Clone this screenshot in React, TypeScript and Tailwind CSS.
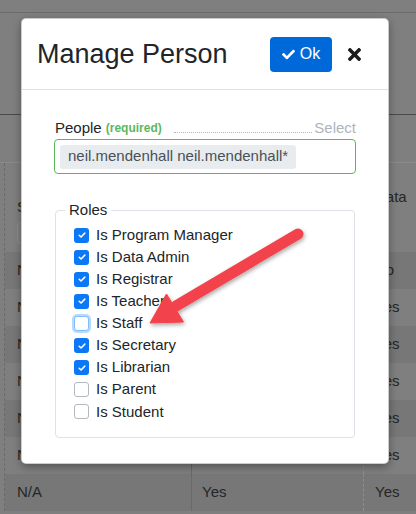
import { FaCheck, FaTimes } from 'react-icons/fa';

const roles = [
  { label: 'Is Program Manager', checked: true },
  { label: 'Is Data Admin', checked: true },
  { label: 'Is Registrar', checked: true },
  { label: 'Is Teacher', checked: true },
  { label: 'Is Staff', checked: false, focused: true },
  { label: 'Is Secretary', checked: true },
  { label: 'Is Librarian', checked: true },
  { label: 'Is Parent', checked: false },
  { label: 'Is Student', checked: false },
];

const rows = ['No', 'Yes', 'Yes', 'Yes', 'Yes', 'Yes', 'Yes'];

function Checkbox({ checked, focused }: { checked: boolean; focused?: boolean }) {
  if (checked) {
    return (
      <span className="w-[15px] h-[15px] rounded-[3px] bg-[#0b78f5] flex items-center justify-center shrink-0">
        <svg viewBox="0 0 16 16" className="w-[10px] h-[10px]">
          <path d="M3.5 8.5l3 2.8L12.5 5" fill="none" stroke="#fff" strokeWidth="2.4" strokeLinecap="round" strokeLinejoin="round" />
        </svg>
      </span>
    );
  }
  return (
    <span
      className={`w-[15px] h-[15px] rounded-[3px] bg-white shrink-0 border ${
        focused ? 'border-[#80bdff] shadow-[0_0_0_2px_rgba(0,123,255,0.28)]' : 'border-[#b3b9bf]'
      }`}
    />
  );
}

export default function App() {
  return (
    <div className="relative w-[416px] h-[514px] overflow-hidden bg-[#7f7f7f] font-['Liberation_Sans',Arial,sans-serif] text-[#262626]">
      {/* page behind the backdrop */}
      <div className="h-[13px] border-b border-[#6c6c6c]" />
      <div className="h-[102px] border-b border-[#4a4a4a]" />
      <div className="h-[48px] border-b border-[#8a8a8a]" />
      <div className="ml-[4px] border-l border-dashed border-[#6a6a6a]">
        <div className="grid grid-cols-[186px_172px_1fr] h-[89px]">
          <div className="pl-3 pt-[35px]">
            <div className="text-[15px] leading-[18px]">Status</div>
            <div className="mt-[6px] w-[150px] h-[22px] rounded-[3px] border border-[#8c8c8c] bg-[#828282]" />
          </div>
          <div className="border-l border-[#6a6a6a] pl-[10px] pt-[25px] text-[15px] leading-[18px]">Is Teacher</div>
          <div className="border-l border-dashed border-[#8e8e8e] pl-[11px] pt-[25px] text-[15px] leading-[18px]">Data</div>
        </div>
        {rows.map((r, i) => (
          <div
            key={i}
            className={`grid grid-cols-[186px_172px_1fr] h-[37px] text-[15px] ${i % 2 === 0 ? 'bg-[#777777]' : 'bg-[#7f7f7f]'}`}
          >
            <div className="pl-3 flex items-center">N/A</div>
            <div className="border-l border-[#6a6a6a] pl-[10px] flex items-center">Yes</div>
            <div className="border-l border-dashed border-[#8e8e8e] pl-[11px] flex items-center">{r}</div>
          </div>
        ))}
      </div>

      {/* modal */}
      <div className="absolute left-[21px] top-[18px] w-[368px] h-[446px] bg-white rounded-[5px] border border-black/20 shadow-[0_3px_8px_rgba(0,0,0,0.35)] text-[#212529]">
        <div className="h-[71px] border-b border-[#dee2e6] flex items-center pl-[15px] pr-[24px]">
          <h4 className="text-[27px] leading-none font-normal flex-1">Manage Person</h4>
          <button className="h-[35px] w-[62px] rounded-[4px] bg-[#0069d9] text-white flex items-center justify-center gap-[5px] text-[16px]">
            <FaCheck size={13} />
            <span>Ok</span>
          </button>
          <span className="ml-[13px] text-[#1c1c1c] flex items-center">
            <FaTimes size={19} />
          </span>
        </div>

        <div className="px-[32px] pt-[29px]">
          <div className="flex items-end h-[18px] text-[15px] leading-[18px]">
            <span className="pl-[1px]">People</span>
            <span className="ml-[4px] text-[12px] text-[#5cb85c] font-semibold">(required)</span>
            <span className="flex-1 ml-[12px] mr-[2px] mb-[4px] border-b-[1.5px] border-dotted border-[#b8b8b8]" />
            <span className="text-[#adb5bd]">Select</span>
          </div>
          <div className="mt-[2px] h-[35px] rounded-[4px] border border-[#5cb85c] flex items-center px-[5px]">
            <span className="h-[24px] rounded-[3px] bg-[#e9ecef] text-[#495057] text-[15px] flex items-center px-[8px]">
              neil.mendenhall neil.mendenhall*
            </span>
          </div>

          <fieldset className="mt-[27px] ml-[1px] mr-[1px] border border-[#dee2e6] rounded-[4px] pb-[14px]">
            <legend className="ml-[9px] px-[4px] text-[15px] leading-[18px]">Roles</legend>
            <div className="pl-[18px] pt-[5px]">
              {roles.map((r) => (
                <label key={r.label} className="h-[22.1px] flex items-center gap-[7px] text-[15px]">
                  <Checkbox checked={r.checked} focused={r.focused} />
                  <span>{r.label}</span>
                </label>
              ))}
            </div>
          </fieldset>
        </div>
      </div>

      {/* annotation arrow */}
      <svg className="absolute inset-0 pointer-events-none" width="416" height="514" viewBox="0 0 416 514">
        <defs>
          <filter id="sh" x="-20%" y="-20%" width="140%" height="140%">
            <feDropShadow dx="1" dy="2" stdDeviation="2" floodColor="#000" floodOpacity="0.35" />
          </filter>
        </defs>
        <g filter="url(#sh)" fill="#f2434b" stroke="#f2434b">
          <line x1="298" y1="234" x2="176" y2="306" strokeWidth="11" strokeLinecap="round" />
          <polygon points="150,323 166.5,294 183.5,322" strokeWidth="1" strokeLinejoin="round" />
        </g>
      </svg>
    </div>
  );
}
